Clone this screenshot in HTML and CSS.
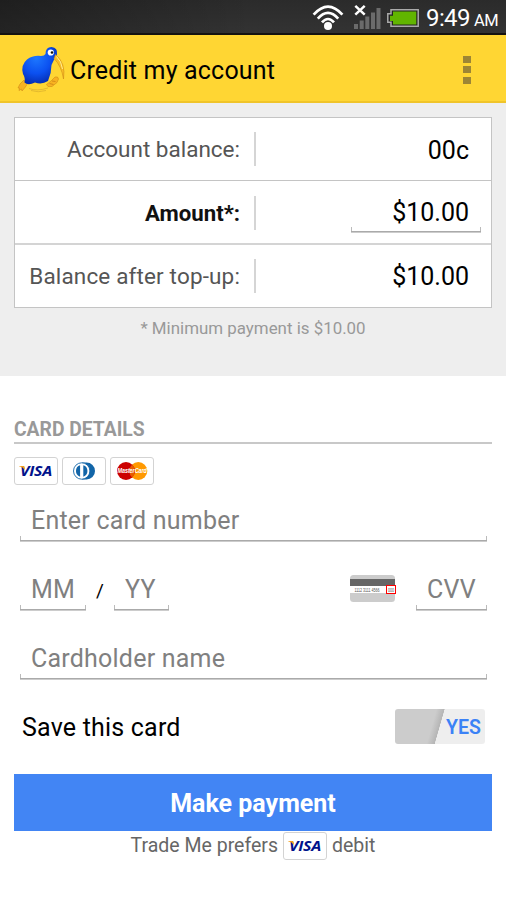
FILE: index.html
```
<!DOCTYPE html>
<html lang="en">
<head>
    <meta charset="UTF-8">
    <meta name="viewport" content="width=device-width, initial-scale=1.0">
    <title>Credit my account</title>
    <link rel="stylesheet" href="styles.css">
</head>
<body>
    <div class="status-bar">
        <svg class="wifi" width="32" height="27" viewBox="0 0 32 27">
            <g fill="none" stroke="#fff" stroke-width="2.7">
                <path d="M1.6 10.6 Q16 -5.5 30.4 10.6"/>
                <path d="M5.8 14.6 Q16 3.2 26.2 14.6"/>
                <path d="M10 18.4 Q16 11.6 22 18.4"/>
            </g>
            <circle cx="16" cy="22" r="4" fill="#fff"/>
        </svg>
        <svg class="signal" width="27" height="25" viewBox="0 0 27 25">
            <g fill="#6b6b6b">
                <rect x="0" y="20" width="4" height="5"/>
                <rect x="5.7" y="16.5" width="4" height="8.5"/>
                <rect x="11.3" y="12.5" width="4" height="12.5"/>
                <rect x="17" y="8.5" width="4" height="16.5"/>
                <rect x="22.5" y="4" width="4" height="21"/>
            </g>
            <path d="M1.3 1.8 L10.7 10.7 M10.7 1.8 L1.3 10.7" stroke="#fff" stroke-width="2.5"/>
        </svg>
        <svg class="battery" width="32" height="18" viewBox="0 0 32 18">
            <path d="M4 .8 H31.2 V17.2 H4 V13.3 H.8 V4.7 H4 Z" fill="#222" stroke="#aaa" stroke-width="1.5"/>
            <path d="M6 2.5 H29.3 V15.5 H6 V12 H3 V6.7 H6 Z" fill="#61b500"/>
        </svg>
        <span class="time">9:49</span>
        <span class="ampm">AM</span>
    </div>

    <div class="action-bar">
        <svg class="kiwi" width="48" height="48" viewBox="0 0 48 48">
            <defs>
                <radialGradient id="blue" cx=".4" cy=".3" r=".75">
                    <stop offset="0" stop-color="#1d78ff"/>
                    <stop offset=".55" stop-color="#0b50f0"/>
                    <stop offset="1" stop-color="#0428a8"/>
                </radialGradient>
            </defs>
            <g fill="none" stroke="#d9ae2c" stroke-width=".7">
                <path d="M12 42.5 Q20 45.5 31 42"/>
                <path d="M14 44.5 Q21 47 29 44.5"/>
            </g>
            <path d="M7 34 L3 38 L1 42 L2.5 42 L2 44.5 L4.5 43 L5 45 L8 41.5 L10 38.5 Z" fill="#f8b321" stroke="#d08a18" stroke-width=".6"/>
            <path d="M38 31 L34 35 L29.5 38.5 L31 40.5 L35 40.5 L40 36.5 L41.5 33 L40.5 31 Z" fill="#f8b321" stroke="#d08a18" stroke-width=".6"/>
            <path d="M35 35 L38.5 35.5 M32.5 37.5 L36.5 38.5" stroke="#bd7410" stroke-width=".6"/>
            <path d="M28.5 8 Q28.5 1 34.5 1 Q41 1.5 40 8.5 Q37 13 34.5 19 Q34.5 27 31 35 Q25 39 18 36.5 Q11 40 7.5 36.5 Q8.5 32 6 28 Q3.5 19 10 13.5 Q16 9 24 10 Q27.5 10 28.5 8 Z" fill="url(#blue)"/>
            <path d="M38.5 8.5 Q49 17 46.5 33 Q44.5 20 37 12.5 Z" fill="#f9bd25" stroke="#c78117" stroke-width=".5"/>
            <path d="M39.5 10.5 Q44.5 15 45.5 23" stroke="#ffef91" stroke-width="1" fill="none"/>
            <circle cx="33.8" cy="6.5" r="3.1" fill="#fff"/>
            <circle cx="35" cy="6.5" r="1.3" fill="#111"/>
        </svg>
        <h1>Credit my account</h1>
        <div class="overflow">
            <i></i>
            <i></i>
            <i></i>
        </div>
    </div>

    <div class="summary">
        <div class="balances">
            <div class="row">
                <div class="label">Account balance:</div>
                <div class="value">00c</div>
            </div>
            <div class="row">
                <div class="label strong">Amount*:</div>
                <div class="value"><span class="field amount">$10.00</span></div>
            </div>
            <div class="row">
                <div class="label wide">Balance after top-up:</div>
                <div class="value">$10.00</div>
            </div>
        </div>
        <p class="note">* Minimum payment is $10.00</p>
    </div>

    <div class="details">
        <h2>CARD DETAILS</h2>
        <div class="cards">
            <span class="chip">
                <svg width="42" height="26" viewBox="0 0 42 26">
                    <text class="visa" transform="translate(5 18) scale(1.14 1)">VISA</text>
                    <path d="M4 8 H8.5 Q10 8.3 10 12 Q8 9 4 8.3 Z" fill="#f7a11a"/>
                </svg>
            </span>
            <span class="chip">
                <svg width="42" height="26" viewBox="0 0 42 26">
                    <path d="M19 4.5 H23.5 A8.5 8.5 0 0 1 23.5 21.5 H19 Z" fill="#1265a8"/>
                    <circle cx="18.7" cy="13" r="8.2" fill="#fff" stroke="#1265a8" stroke-width=".9"/>
                    <path d="M17.1 7.3 A6 6 0 0 0 17.1 18.7 Z M20.3 7.3 A6 6 0 0 1 20.3 18.7 Z" fill="#1265a8"/>
                </svg>
            </span>
            <span class="chip">
                <svg width="42" height="26" viewBox="0 0 42 26">
                    <circle cx="27.3" cy="13" r="9" fill="#f90"/>
                    <circle cx="15" cy="13" r="9" fill="#c00"/>
                    <path d="M21.1 6.5 A9 9 0 0 1 21.1 19.5 A9 9 0 0 1 21.1 6.5" fill="#e85c00"/>
                    <text class="mastercard" transform="translate(6.5 15.3) scale(.76 1)">MasterCard</text>
                </svg>
            </span>
        </div>

        <div class="form-line">
            <input class="field" type="text" placeholder="Enter card number">
        </div>
        <div class="form-line">
            <input class="field month" type="text" placeholder="MM">
            <span class="slash">/</span>
            <input class="field year" type="text" placeholder="YY">
            <svg class="card-back" width="46" height="27" viewBox="0 0 46 27">
                <rect width="45" height="27" rx="3.5" fill="#ccc"/>
                <rect y="4" width="45" height="7" fill="#666"/>
                <rect y="11" width="45" height="7" fill="#fff"/>
                <text transform="translate(4.5 16.5) scale(.66 1)">1112 3111 4566</text>
                <text transform="translate(38 16.5) scale(.66 1)">000</text>
                <rect x="36.5" y="10.5" width="9" height="8" fill="none" stroke="#f00"/>
            </svg>
            <input class="field cvv" type="text" placeholder="CVV">
        </div>
        <div class="form-line">
            <input class="field" type="text" placeholder="Cardholder name">
        </div>

        <div class="save">
            <span>Save this card</span>
            <div class="toggle">YES</div>
        </div>

        <button>Make payment</button>
        <div class="prefers">
            <span>Trade Me prefers</span>
            <span class="chip">
                <svg width="42" height="26" viewBox="0 0 42 26">
                    <text class="visa" transform="translate(5 18) scale(1.14 1)">VISA</text>
                    <path d="M4 8 H8.5 Q10 8.3 10 12 Q8 9 4 8.3 Z" fill="#f7a11a"/>
                </svg>
            </span>
            <span>debit</span>
        </div>
    </div>
</body>
</html>
```
FILE: styles.css
```
* {
    box-sizing: border-box;
}
body {
    margin: 0;
    background-color: #fff;
    color: #000;
    font-family: Roboto, sans-serif;
    font-size: 25px;
}
h1, h2, p {
    margin: 0;
    font-weight: normal;
}
svg {
    display: block;
    flex: none;
}
.status-bar {
    display: flex;
    justify-content: flex-end;
    height: 35px;
    padding-right: 8px;
    background: linear-gradient(to right, rgba(0, 0, 0, 0.3), transparent 50%), linear-gradient(#2b2b2b, #333);
    border-bottom: 2px solid #151310;
    color: #fff;
    white-space: nowrap;
}
.wifi {
    margin: 4px 10px 0 0;
}
.signal {
    margin: 4px 6px 0 0;
}
.battery {
    margin: 9px 7px 0 0;
}
.time {
    width: 45px;
    line-height: 37px;
    font-size: 24px;
    letter-spacing: -0.6px;
}
.ampm {
    width: 24px;
    margin-left: 3px;
    line-height: 41px;
    font-size: 16.5px;
    letter-spacing: -0.5px;
}
.action-bar {
    display: flex;
    align-items: center;
    height: 68px;
    padding: 3px 35px 0 17px;
    background-color: #ffd633;
    border-bottom: 2px solid #f0c42a;
}
.kiwi {
    margin-right: 5px;
}
h1 {
    flex: 1;
    padding-top: 1px;
    font-size: 25px;
    letter-spacing: 0.18px;
}
.overflow i {
    display: block;
    width: 8px;
    height: 7px;
    margin: 3.5px 0;
    background-color: #9d8535;
}
.summary {
    height: 273px;
    padding: 14px 14px 0;
    background-color: #eee;
}
.balances {
    height: 191px;
    border: 1px solid #c4c4c4;
    background-color: #fff;
}
.row {
    display: flex;
    align-items: center;
    height: 62px;
}
.row + .row {
    height: 63px;
    padding-top: 1px;
    border-top: 1px solid #c4c4c4;
}
.row:last-child {
    border-top: 2px solid #d4d4d4;
}
.label {
    width: 241px;
    padding-right: 14px;
    border-right: 2px solid #d5d5d5;
    line-height: 34px;
    color: #555;
    font-size: 22.5px;
    text-align: right;
    white-space: nowrap;
}
.label.strong {
    color: #111;
    font-size: 22.2px;
    font-weight: bold;
}
.label.wide {
    letter-spacing: 0.15px;
}
.value {
    flex: 1;
    padding-right: 22px;
    text-align: right;
}
.row:first-child .value {
    padding-top: 2px;
}
.note {
    margin-top: 10px;
    line-height: 20px;
    color: #999;
    font-size: 16.9px;
    text-align: center;
}
/* underline with a small tick at each end */
.field {
    display: block;
    width: 467px;
    height: 41px;
    padding: 0 0 2px 11px;
    border: none;
    border-radius: 0;
    outline: none;
    background: linear-gradient(#aaa 50%, #ccc 50%) left bottom / 100% 2px no-repeat,
        linear-gradient(#bbb, #bbb) left bottom / 1px 6px no-repeat,
        linear-gradient(#bbb, #bbb) right bottom / 1px 6px no-repeat;
    font: 25px Roboto, sans-serif;
    letter-spacing: 0.22px;
}
.field::placeholder {
    color: #808080;
    opacity: 1;
}
.field.amount {
    width: 130px;
    margin: 0 -12px 0 auto;
    padding-right: 12px;
    line-height: 41px;
    letter-spacing: 0;
}
.details {
    padding: 42px 14px 0;
}
h2 {
    height: 26px;
    border-bottom: 2px solid #c8c8c8;
    line-height: 24px;
    color: #999;
    font-size: 19.3px;
    font-weight: bold;
}
.cards {
    display: flex;
    gap: 4px;
    margin-top: 13px;
}
.chip {
    display: block;
    width: 44px;
    height: 28px;
    border: 1px solid #d3d3d3;
    border-radius: 3px;
    background-color: #fff;
}
.visa {
    fill: #00128b;
    font: italic bold 14px "Open Sans", sans-serif;
    letter-spacing: -0.2px;
}
.mastercard {
    fill: #fff;
    font: italic bold 7.2px "Liberation Sans", sans-serif;
    letter-spacing: -0.1px;
}
.form-line {
    display: flex;
    align-items: center;
    margin: 16px 5px 28px 6px;
}
.form-line + .form-line {
    margin-top: 0;
}
.field.month {
    width: 66px;
}
.slash {
    width: 28px;
    font-size: 19px;
    text-align: center;
}
.field.year {
    width: 55px;
}
.card-back {
    margin: -4px 20px 0 auto;
}
.card-back text {
    fill: #555;
    font: 5.5px "Liberation Sans", sans-serif;
}
.field.cvv {
    width: 71px;
}
.save {
    display: flex;
    justify-content: space-between;
    align-items: center;
    height: 35px;
    margin: 29px 7px 30px 8px;
}
.save span {
    padding-top: 2px;
    letter-spacing: 0.2px;
}
.toggle {
    width: 90px;
    height: 35px;
    padding-right: 4px;
    border-radius: 3px;
    background: linear-gradient(106deg, #ccc 40px, #b5b5b5 47.5px, #eee 48px);
    line-height: 37px;
    color: #3b82f6;
    font-size: 19.5px;
    font-weight: 600;
    text-align: right;
}
button {
    display: block;
    width: 100%;
    height: 57px;
    padding: 2px 0 0;
    border: none;
    background-color: #4285f4;
    color: #fff;
    font: bold 25px Roboto, sans-serif;
}
.prefers {
    display: flex;
    justify-content: center;
    gap: 5px;
    margin-top: 1px;
    line-height: 27px;
    color: #666;
    font-size: 19.5px;
}
```
